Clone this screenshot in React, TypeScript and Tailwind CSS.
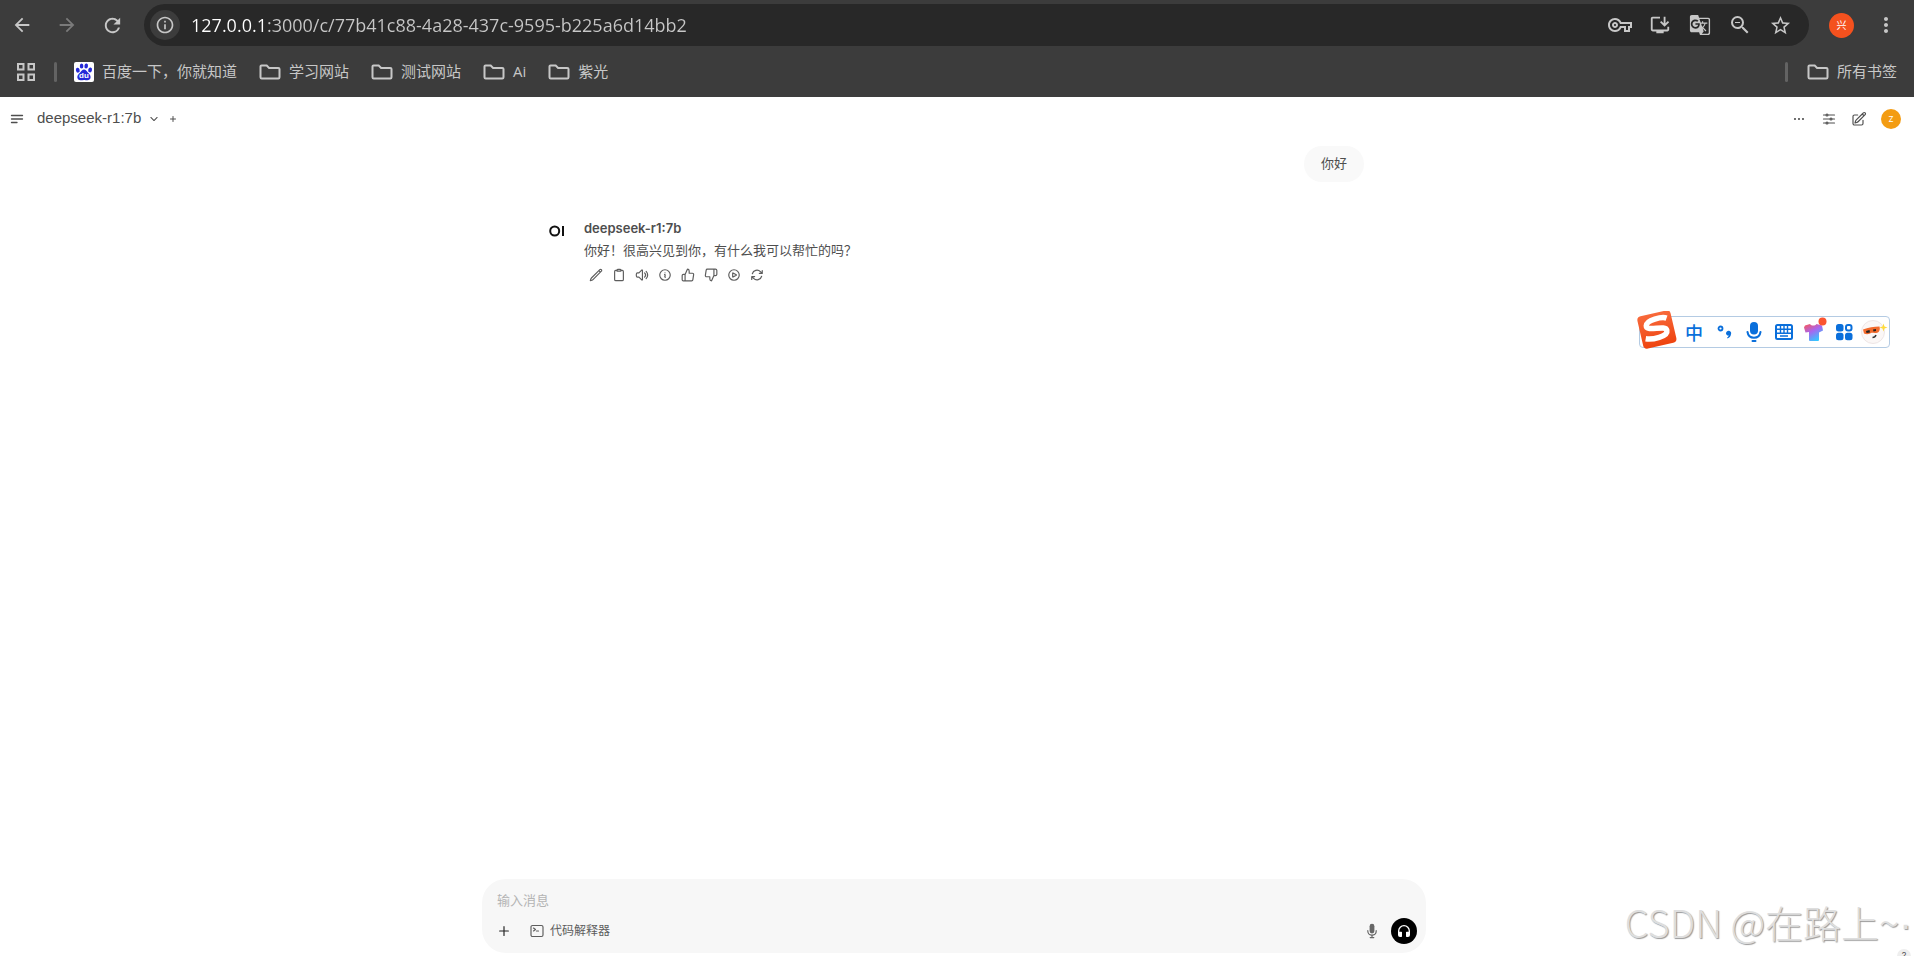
import type { ReactNode } from "react";
import {
  HiOutlineAdjustmentsHorizontal,
  HiOutlineArrowPath,
  HiOutlineBars3BottomLeft,
  HiOutlineChevronDown,
  HiOutlineClipboard,
  HiOutlineCommandLine,
  HiOutlineEllipsisHorizontal,
  HiOutlineInformationCircle,
  HiOutlinePencil,
  HiOutlinePencilSquare,
  HiOutlinePlayCircle,
  HiOutlinePlus,
  HiOutlineSpeakerWave,
} from "react-icons/hi2";
import { FiThumbsDown, FiThumbsUp } from "react-icons/fi";
import {
  MdArrowBack,
  MdArrowForward,
  MdGTranslate,
  MdInfoOutline,
  MdMoreVert,
  MdOutlineInstallDesktop,
  MdOutlineVpnKey,
  MdRefresh,
  MdStarBorder,
  MdZoomOut,
} from "react-icons/md";

interface IconButtonProps {
  label: string;
  className?: string;
  children: ReactNode;
}

const IconButton = ({ label, className = "", children }: IconButtonProps) => (
  <button
    type="button"
    aria-label={label}
    className={`flex shrink-0 items-center justify-center ${className}`}
  >
    {children}
  </button>
);

const FolderIcon = () => (
  <svg viewBox="0 0 22 16" className="h-4 w-[22px] shrink-0" fill="none" stroke="currentColor" strokeWidth="2">
    <path d="M2.5 1.5h5.2l2.4 2.4h9.2a1.2 1.2 0 0 1 1.2 1.2v8.2a1.2 1.2 0 0 1-1.2 1.2H2.7a1.2 1.2 0 0 1-1.2-1.2V2.5a1 1 0 0 1 1-1Z" />
  </svg>
);

const BaiduIcon = () => (
  <svg viewBox="0 0 20 20" className="size-5 shrink-0">
    <rect width="20" height="20" rx="2" fill="#fff" />
    <g fill="#2529d8">
      <ellipse cx="3.8" cy="8.2" rx="1.9" ry="2.5" transform="rotate(-15 3.8 8.2)" />
      <ellipse cx="7.6" cy="4" rx="1.8" ry="2.6" />
      <ellipse cx="12.2" cy="4" rx="1.8" ry="2.6" transform="rotate(8 12.2 4)" />
      <ellipse cx="16.1" cy="7.9" rx="1.9" ry="2.5" transform="rotate(15 16.1 7.9)" />
      <path d="M10 7.6c1.8 0 2.6 1.5 3.6 2.7 1.3 1.4 3.2 2.6 3 5-.2 2.2-1.6 3-3.3 3-1.3 0-2-.4-3.3-.4s-2.3.4-3.5.4c-1.7 0-3.1-1-3.2-3-.1-2.3 1.8-3.6 3.1-5 1-1.1 1.9-2.7 3.6-2.7Z" />
    </g>
    <text x="10" y="16" textAnchor="middle" fill="#fff" fontSize="8" fontWeight="700" fontFamily="Liberation Sans, sans-serif">
      du
    </text>
  </svg>
);

const Bookmark = ({ name, icon }: { name: string; icon?: ReactNode }) => (
  <a href="#" className="flex items-center gap-2 whitespace-nowrap">
    {icon ?? <FolderIcon />}
    <span>{name}</span>
  </a>
);

const Divider = () => <span className="h-5 w-[3px] rounded-full bg-[#636363]" />;

const BrowserBar = () => (
  <header className="bg-[#3c3c3c] font-['Open_Sans','Noto_Sans_CJK_SC',sans-serif] text-[#c7c7c7]">
    <div className="flex h-[50px] items-center pr-4 pl-2">
      <div className="flex w-[136px] items-center gap-[17px]">
        <IconButton label="返回" className="size-7">
          <MdArrowBack className="size-[22px]" />
        </IconButton>
        <IconButton label="前进" className="size-7 text-[#7a7a7a]">
          <MdArrowForward className="size-[22px]" />
        </IconButton>
        <IconButton label="重新加载" className="size-7">
          <MdRefresh className="size-[23px]" />
        </IconButton>
      </div>
      <div className="flex h-[42px] flex-1 items-center rounded-full bg-[#282828] pr-[17px] pl-[6px]">
        <IconButton label="网站信息" className="size-[30px] rounded-full bg-[#3c3c3c]">
          <MdInfoOutline className="size-5" />
        </IconButton>
        {/* the host part is brighter than the path */}
        <input
          aria-label="地址"
          readOnly
          value="127.0.0.1:3000/c/77b41c88-4a28-437c-9595-b225a6d14bb2"
          className="ml-[11px] flex-1 bg-[linear-gradient(90deg,#fff_75px,#c7c7c7_75px)] bg-clip-text text-lg text-transparent outline-none"
        />
        <div className="flex gap-4">
          <IconButton label="密码" className="size-6">
            <MdOutlineVpnKey className="size-6" />
          </IconButton>
          <IconButton label="安装" className="size-6">
            <MdOutlineInstallDesktop className="size-[22px]" />
          </IconButton>
          <IconButton label="翻译" className="size-6">
            <MdGTranslate className="size-[22px]" />
          </IconButton>
          <IconButton label="缩放" className="size-6">
            <MdZoomOut className="size-6" />
          </IconButton>
          <IconButton label="收藏" className="size-6">
            <MdStarBorder className="size-[23px]" />
          </IconButton>
        </div>
      </div>
      <IconButton label="个人资料" className="ml-5 size-[25px] rounded-full bg-[#f4511e] text-[10px] text-white">
        兴
      </IconButton>
      <IconButton label="菜单" className="ml-5 size-6">
        <MdMoreVert className="size-6" />
      </IconButton>
    </div>
    <nav className="flex h-[47px] items-center pr-[17px] pb-1 pl-[17px] text-[15px]">
      <IconButton label="应用">
        <svg viewBox="0 0 18 18" className="size-[18px]" fill="none" stroke="currentColor" strokeWidth="2">
          <path d="M1 1h5.500v5.500H1zM11.500 1H17v5.500h-5.500zM1 11.500h5.500V17H1zM11.500 11.500H17V17h-5.500z" />
        </svg>
      </IconButton>
      <div className="ml-[19px] flex items-center gap-[17px]">
        <Divider />
        <div className="flex items-center gap-[22px]">
          <Bookmark name="百度一下，你就知道" icon={<BaiduIcon />} />
          <Bookmark name="学习网站" />
          <Bookmark name="测试网站" />
          <Bookmark name="Ai" />
          <Bookmark name="紫光" />
        </div>
      </div>
      <div className="ml-auto flex items-center gap-[19px]">
        <Divider />
        <Bookmark name="所有书签" />
      </div>
    </nav>
  </header>
);

const ChatHeader = () => (
  <div className="flex h-[43px] items-center justify-between px-[9px] text-[#4e4e4e]">
    <div className="flex items-center">
      <IconButton label="侧边栏">
        <HiOutlineBars3BottomLeft className="size-4" strokeWidth={2} />
      </IconButton>
      <button
        type="button"
        className="ml-3 flex items-center gap-2 font-['Liberation_Sans',sans-serif] text-[15px]"
      >
        deepseek-r1:7b
        <HiOutlineChevronDown className="size-[10px]" strokeWidth={2.5} />
      </button>
      <IconButton label="添加模型" className="ml-[10px]">
        <HiOutlinePlus className="size-2" strokeWidth={3} />
      </IconButton>
    </div>
    <div className="flex items-center gap-[14px] pr-1">
      <IconButton label="更多">
        <HiOutlineEllipsisHorizontal className="size-4" strokeWidth={1.75} />
      </IconButton>
      <IconButton label="对话设置">
        <HiOutlineAdjustmentsHorizontal className="size-4" strokeWidth={1.75} />
      </IconButton>
      <IconButton label="新对话">
        <HiOutlinePencilSquare className="size-4" strokeWidth={1.75} />
      </IconButton>
      <IconButton label="用户" className="size-5 rounded-full bg-[#f39c12] text-[8px] text-white">
        Z
      </IconButton>
    </div>
  </div>
);

const actions = [
  { label: "编辑", icon: <HiOutlinePencil strokeWidth={2} /> },
  { label: "复制", icon: <HiOutlineClipboard strokeWidth={2} /> },
  { label: "朗读", icon: <HiOutlineSpeakerWave strokeWidth={2} /> },
  { label: "信息", icon: <HiOutlineInformationCircle strokeWidth={2} /> },
  { label: "点赞", icon: <FiThumbsUp /> },
  { label: "点踩", icon: <FiThumbsDown /> },
  { label: "继续生成", icon: <HiOutlinePlayCircle strokeWidth={2} /> },
  { label: "重新生成", icon: <HiOutlineArrowPath strokeWidth={2} /> },
];

const Conversation = () => (
  <div className="mx-auto w-full max-w-[820px] flex-1 text-[13px] text-[#4e4e4e]">
    <div className="flex justify-end pt-[6px]">
      <p className="rounded-[20px] bg-[#f9f9f9] px-[17px] pt-[7px] pb-[9px] leading-5">你好</p>
    </div>
    <div className="flex pt-9">
      <div className="w-10 shrink-0 pt-[7px] pl-[5px]">
        <svg viewBox="0 0 16 12" className="h-3 w-4" fill="none" stroke="#111" strokeWidth="2">
          <circle cx="5.700" cy="6" r="4.500" />
          <path d="M14 1v10" />
        </svg>
      </div>
      <div>
        <h2 className="leading-5 font-semibold">deepseek-r1:7b</h2>
        <p className="leading-6">你好！很高兴见到你，有什么我可以帮忙的吗？</p>
        <div className="flex gap-2 pt-[5px] pl-1">
          {actions.map(({ label, icon }) => (
            <IconButton key={label} label={label} className="size-[15px] text-sm text-[#5d5d5d]">
              {icon}
            </IconButton>
          ))}
        </div>
      </div>
    </div>
  </div>
);

const MessageBox = () => (
  <form className="mx-auto mb-[3px] w-full max-w-[944px] rounded-3xl bg-[#f7f7f7] pt-[11px] pr-[9px] pb-[9px] pl-[15px] text-[#4e4e4e]">
    <input
      aria-label="输入消息"
      placeholder="输入消息"
      className="block h-5 w-full bg-transparent text-[13px] outline-none placeholder:text-[#b4b4b4]"
    />
    <div className="flex items-center pt-2">
      <IconButton label="更多输入" className="text-[#222]">
        <HiOutlinePlus className="size-[14px]" strokeWidth={2} />
      </IconButton>
      <button type="button" className="ml-[18px] flex items-center gap-[5px] text-xs text-[#5d5d5d]">
        <HiOutlineCommandLine className="size-4" strokeWidth={1.75} />
        代码解释器
      </button>
      <IconButton label="语音输入" className="ml-auto text-[#676767]">
        <svg viewBox="0 0 20 20" fill="currentColor" className="size-4">
          <path d="M7 4a3 3 0 0 1 6 0v6a3 3 0 1 1-6 0V4Z" />
          <path d="M5.500 9.643a.75.75 0 0 0-1.500 0V10c0 3.060 2.290 5.585 5.250 5.954V17.500h-1.500a.75.75 0 0 0 0 1.500h4.500a.75.75 0 0 0 0-1.500h-1.500v-1.546A6.001 6.001 0 0 0 16 10v-.357a.75.75 0 0 0-1.500 0V10a4.500 4.500 0 0 1-9 0v-.357Z" />
        </svg>
      </IconButton>
      <IconButton label="语音通话" className="ml-[11px] size-[26px] rounded-full bg-black text-white">
        <svg viewBox="0 0 24 24" fill="currentColor" className="size-4">
          <path d="M12 5a7 7 0 0 0-7 7v1.170c.313-.11.65-.17 1-.17h2a1 1 0 0 1 1 1v6a1 1 0 0 1-1 1H6a3 3 0 0 1-3-3v-6a9 9 0 0 1 18 0v6a3 3 0 0 1-3 3h-2a1 1 0 0 1-1-1v-6a1 1 0 0 1 1-1h2c.35 0 .687.06 1 .17V12a7 7 0 0 0-7-7Z" />
        </svg>
      </IconButton>
    </div>
  </form>
);

const InputMethodBar = () => (
  <div className="absolute top-[316px] right-6 flex h-8 items-center rounded-sm border border-[#b4cbe3] bg-white pr-[3px] pl-[42px] text-[#0a6fdb]">
    <svg viewBox="0 0 40 40" className="absolute -top-[6px] -left-[3px] size-10">
      <defs>
        <linearGradient id="sogou" x1="0" y1="0" x2="0" y2="1">
          <stop offset="0" stopColor="#f8693a" />
          <stop offset="1" stopColor="#ee4410" />
        </linearGradient>
      </defs>
      <g transform="rotate(-13 20 19)">
        <rect x="3" y="2" width="34" height="33" rx="4" fill="url(#sogou)" />
        <path
          d="M32 9.500c-4-2.500-20-3-21.500 3-1.500 6.500 19 3 19 9 0 6.500-16.500 6-22.500 3.500"
          fill="none"
          stroke="#fff"
          strokeWidth="5.500"
        />
      </g>
    </svg>
    <div className="flex items-center gap-[6px]">
      <IconButton label="中文" className="size-6 font-['Noto_Sans_CJK_SC',sans-serif] text-[18px] leading-none font-medium">
        中
      </IconButton>
      <IconButton label="标点" className="size-6">
        <svg viewBox="0 0 24 24" className="size-6">
          <circle cx="8.500" cy="8.500" r="2" fill="none" stroke="currentColor" strokeWidth="1.800" />
          <path d="M14 13.500a2.600 2.600 0 1 1 5 .8c-.3 2-1.600 3.700-3.500 4.200l-.5-.9c1.100-.6 1.600-1.300 1.700-2.100-1.400.2-2.500-.7-2.700-2Z" fill="currentColor" />
        </svg>
      </IconButton>
      <IconButton label="语音" className="size-6">
        <svg viewBox="0 0 24 24" className="size-6" fill="none" stroke="currentColor" strokeWidth="2">
          <rect x="8" y="2" width="8" height="12.500" rx="4" fill="currentColor" stroke="none" />
          <path d="M5.500 12c.5 3.500 3 5.700 6.500 5.700s6-2.200 6.500-5.700M10.500 21h3" strokeLinecap="round" />
        </svg>
      </IconButton>
      <IconButton label="键盘" className="size-6">
        <svg viewBox="0 0 24 24" className="size-6" fill="none" stroke="currentColor">
          <rect x="4" y="5" width="16" height="14" rx="1.500" strokeWidth="2" />
          <path d="M5 9.200h14M5 13.200h14M8.500 5v8M12 5v8M15.500 5v8M8 16h8" strokeWidth="1.400" />
        </svg>
      </IconButton>
      <IconButton label="皮肤" className="size-6">
        <svg viewBox="0 0 24 24" className="size-6 overflow-visible">
          <defs>
            <linearGradient id="skin" x1="0" y1="0" x2=".6" y2="1">
              <stop offset="0" stopColor="#ff5550" />
              <stop offset=".5" stopColor="#a767f0" />
              <stop offset="1" stopColor="#35c5ff" />
            </linearGradient>
          </defs>
          <path d="M3 5.500 8 4c1.500 2 5 2 6.500 0L20 5.500l1 5-4 2V20q0 1-1 1H8q-1 0-1-1v-8l-3.500.500-1.500-5Z" fill="url(#skin)" />
          <circle cx="20.500" cy="1.500" r="4" fill="#fb5430" />
        </svg>
      </IconButton>
      <IconButton label="工具箱" className="size-6">
        <svg viewBox="0 0 24 24" className="size-6" fill="currentColor">
          <rect x="4" y="4" width="7.500" height="7.500" rx="2.500" />
          <rect x="14" y="5" width="5.500" height="5.500" rx="2" fill="none" stroke="currentColor" strokeWidth="2" />
          <rect x="4" y="12.800" width="7.500" height="7.500" rx="2.500" />
          <rect x="13" y="12.800" width="7.500" height="7.500" rx="2.500" />
        </svg>
      </IconButton>
      <IconButton label="助手" className="size-6">
        <svg viewBox="0 0 24 24" className="size-6 overflow-visible">
          <circle cx="11" cy="12" r="11.500" fill="#fbf7f6" stroke="#eee6e6" />
          <path d="M1 9.500c5-2 11-3 16.500-3 .8 2.500 0 5-1.500 6-3 1-5 .3-6.500.3-2 1.500-5 2-7.500.7Z" fill="#f26a2c" />
          <path d="m4 11 3.500-1 .5 2.500-3.500.500ZM11 9.500l3-.5v2l-2.500.5Z" fill="#222" />
          <path d="M10.500 17.500c2 0 3-1 3.500-2.500" fill="none" stroke="#333" strokeWidth="1.500" />
          <path d="m21.500 3.500 1 3 3 1-3 1-1 3-1-3-3-1 3-1Z" fill="#ffdb3d" />
        </svg>
      </IconButton>
    </div>
  </div>
);

export default function App() {
  return (
    <div className="relative flex min-h-screen flex-col overflow-hidden bg-white font-['Inter','Noto_Sans_CJK_SC',sans-serif]">
      <BrowserBar />
      <ChatHeader />
      <main className="flex flex-1 flex-col pr-[6px]">
        <Conversation />
        <MessageBox />
      </main>
      <InputMethodBar />
      <button
        type="button"
        className="absolute right-[3px] -bottom-[7px] flex size-[14px] items-center justify-center rounded-full bg-[#eee] text-[9px] text-[#555]"
      >
        ?
      </button>
      <p className="pointer-events-none absolute right-[2px] bottom-1 font-['Noto_Sans_CJK_SC',sans-serif] text-[38px] leading-[54px] font-light whitespace-nowrap text-[#dedede] [text-shadow:1px_1px_1px_#999]">
        CSDN @在路上~<span className="font-['Liberation_Sans',sans-serif]">·</span>
      </p>
    </div>
  );
}
